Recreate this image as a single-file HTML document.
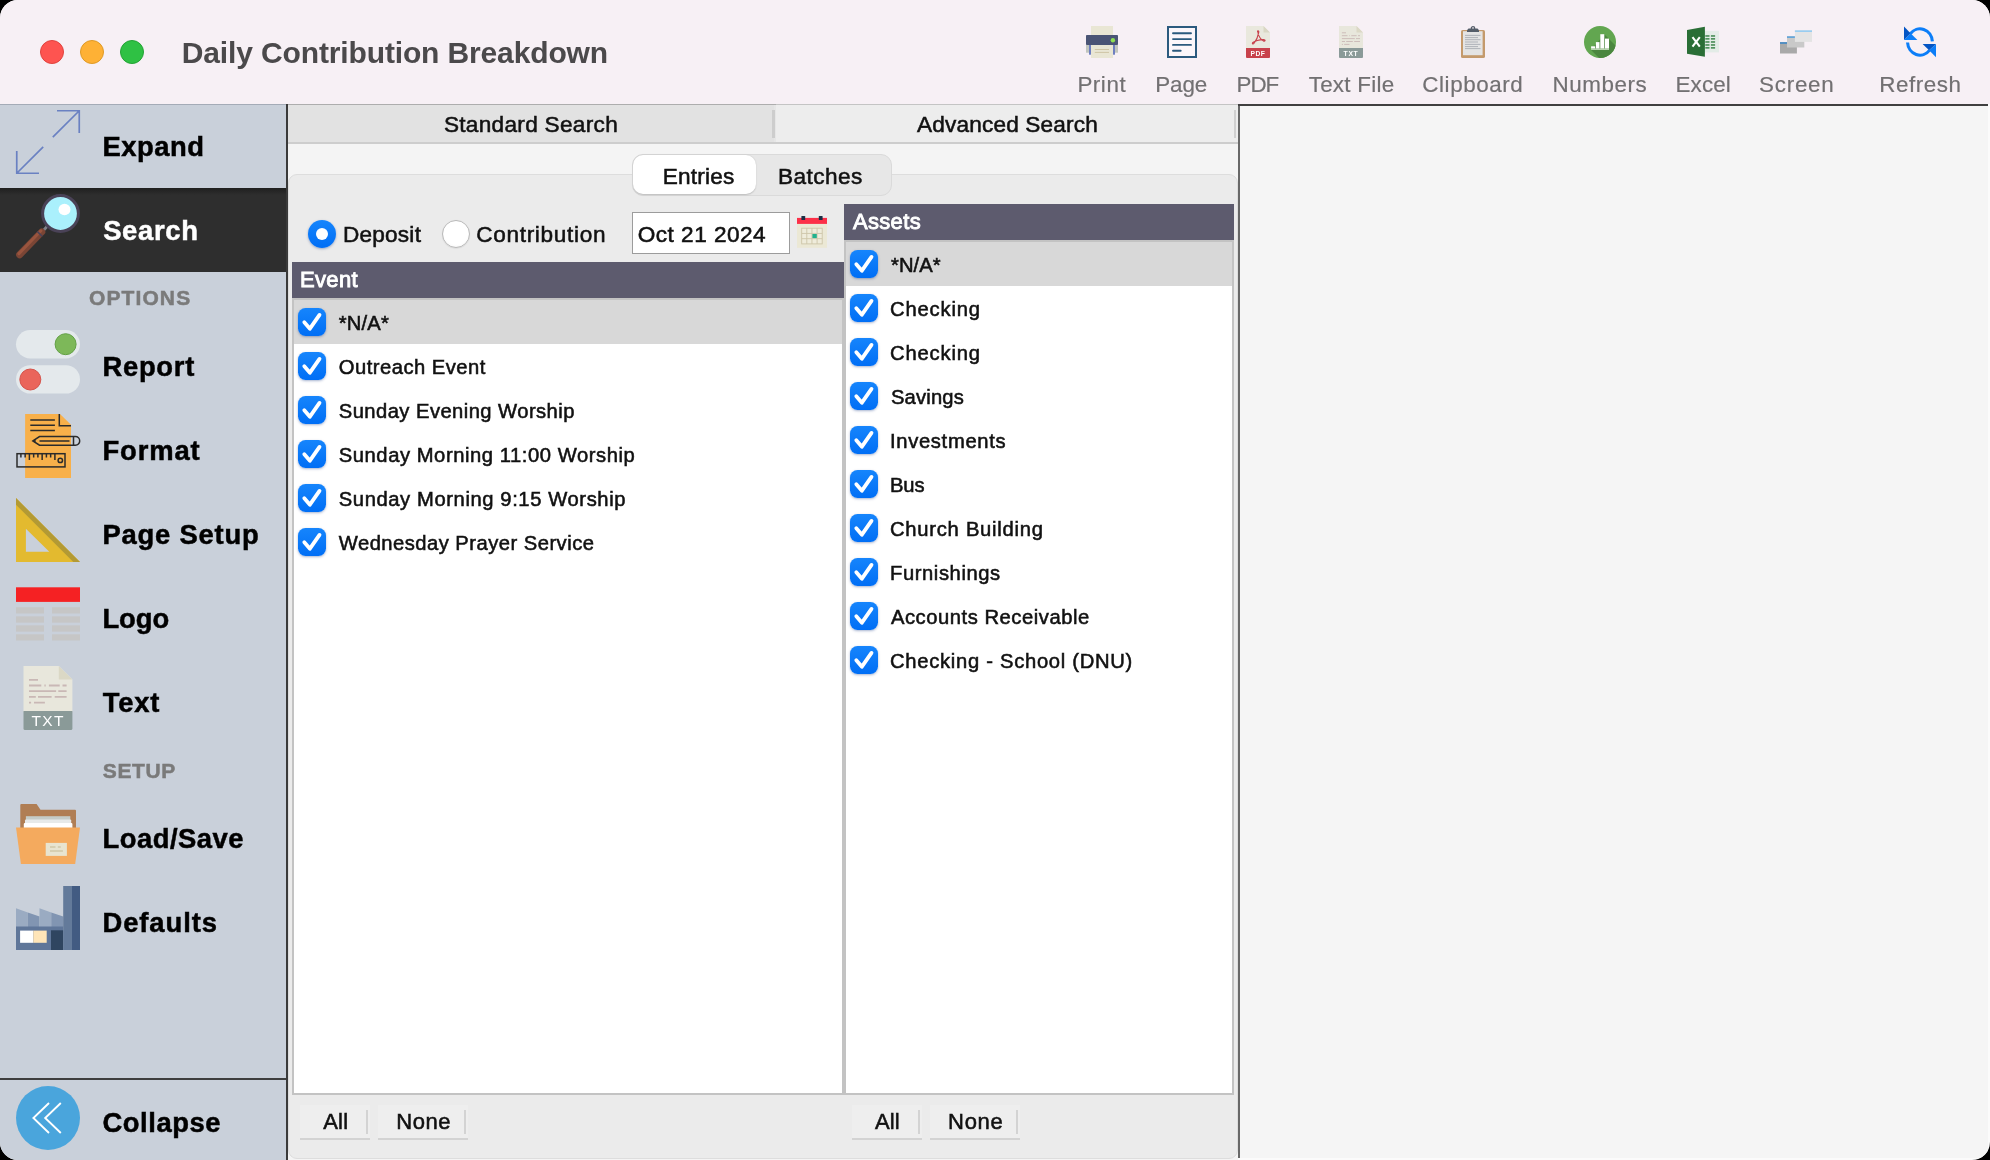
<!DOCTYPE html>
<html>
<head>
<meta charset="utf-8">
<title>Daily Contribution Breakdown</title>
<style>
*{box-sizing:border-box;margin:0;padding:0}
html,body{width:1990px;height:1160px;overflow:hidden;background:#000;font-family:"Liberation Sans",sans-serif;}
#win{position:absolute;left:0;top:0;width:1990px;height:1160px;border-radius:18px;overflow:hidden;background:#fbfbfb;}
.a{position:absolute}
.tx{position:absolute;white-space:nowrap;}
.tl{position:absolute;top:40px;width:24px;height:24px;border-radius:50%;}
.ic{position:absolute;overflow:visible}
.cb{position:absolute;width:28px;height:28px;border-radius:7.5px;background:linear-gradient(#1685fc,#006ef5);box-shadow:0 1px 2.5px rgba(0,40,120,.35);}
.cb svg{position:absolute;left:0;top:0;width:28px;height:28px;}
.btn{position:absolute;top:1105px;height:35px;background:#eeeeee;border-bottom:2px solid #d3d3d3;}
.btn i{position:absolute;right:2px;top:5px;width:2px;height:24px;background:#d3d3d3;}
</style>
</head>
<body>
<div id="win">
<!-- title bar -->
<div class="a" style="left:0;top:0;width:1990px;height:104px;background:#f7f0f5"></div>
<div class="tl" style="left:40px;background:#fe5450;border:1px solid #e0433e"></div>
<div class="tl" style="left:80px;background:#feb135;border:1px solid #df9a26"></div>
<div class="tl" style="left:120px;background:#2fc144;border:1px solid #24a335"></div>

<!-- center panel -->
<div class="a" style="left:288px;top:104px;width:950px;height:1056px;background:#f4f4f4"></div>
<div class="a" style="left:288px;top:105px;width:486px;height:38px;background:#e2e2e2"></div>
<div class="a" style="left:776px;top:105px;width:462px;height:38px;background:#ededed"></div>
<div class="a" style="left:288px;top:104px;width:488px;height:1px;background:#adadad"></div>
<div class="a" style="left:776px;top:104px;width:462px;height:1px;background:#c4c4c4"></div>
<div class="a" style="left:288px;top:142px;width:950px;height:2px;background:#cdcdcd"></div>
<div class="a" style="left:774px;top:105px;width:2px;height:37px;background:#e6e6e6"></div>
<div class="a" style="left:772px;top:110px;width:2.5px;height:28px;background:#cdcdcd"></div>
<div class="a" style="left:1234px;top:110px;width:2px;height:28px;background:#d0d0d0"></div>
<!-- group box -->
<div class="a" style="left:288px;top:174px;width:950px;height:985px;background:#ebebeb;border:1px solid #dddddd;border-radius:9px"></div>
<!-- segmented -->
<div class="a" style="left:632px;top:154px;width:260px;height:42px;background:#e7e7e7;border:1px solid #dadada;border-radius:11px"></div>
<div class="a" style="left:633px;top:155px;width:123px;height:39px;background:#fff;border-radius:10px;box-shadow:0 0.5px 1.5px rgba(0,0,0,.18)"></div>
<!-- radios -->
<div class="a" style="left:307.5px;top:220px;width:28px;height:28px;border-radius:50%;background:linear-gradient(#1685fc,#006ef5);box-shadow:0 1px 2.5px rgba(0,40,120,.35)"></div>
<div class="a" style="left:315.5px;top:228px;width:12px;height:12px;border-radius:50%;background:#fff"></div>
<div class="a" style="left:442px;top:220px;width:28px;height:28px;border-radius:50%;background:radial-gradient(circle at 50% 45%,#fff 60%,#f0f0f0);border:1px solid #b9b9b9;box-shadow:0 0.5px 1px rgba(0,0,0,.10)"></div>
<!-- date input -->
<div class="a" style="left:632px;top:212px;width:158px;height:42px;background:#fff;border:1px solid #9c9c9c"></div>
<!-- Event list -->
<div class="a" style="left:292px;top:298px;width:552px;height:797px;background:#fff;border:2px solid #c3c3c3"></div>
<div class="a" style="left:294px;top:300px;width:548px;height:44px;background:#d8d8d8"></div>
<div class="a" style="left:292px;top:262px;width:552px;height:36px;background:#5d5b6e"></div>
<!-- Assets list -->
<div class="a" style="left:844px;top:240px;width:390px;height:855px;background:#fff;border:2px solid #c3c3c3"></div>
<div class="a" style="left:846px;top:242px;width:386px;height:44px;background:#d8d8d8"></div>
<div class="a" style="left:844px;top:204px;width:390px;height:36px;background:#5d5b6e"></div>
<div class="cb" style="left:298px;top:308px"><svg viewBox="0 0 28 28"><path d="M6.3 14.3 L11.9 20.7 L21.5 6.9" fill="none" stroke="#fff" stroke-width="3.8" stroke-linecap="round" stroke-linejoin="round"/></svg></div>
<div class="cb" style="left:298px;top:352px"><svg viewBox="0 0 28 28"><path d="M6.3 14.3 L11.9 20.7 L21.5 6.9" fill="none" stroke="#fff" stroke-width="3.8" stroke-linecap="round" stroke-linejoin="round"/></svg></div>
<div class="cb" style="left:298px;top:396px"><svg viewBox="0 0 28 28"><path d="M6.3 14.3 L11.9 20.7 L21.5 6.9" fill="none" stroke="#fff" stroke-width="3.8" stroke-linecap="round" stroke-linejoin="round"/></svg></div>
<div class="cb" style="left:298px;top:440px"><svg viewBox="0 0 28 28"><path d="M6.3 14.3 L11.9 20.7 L21.5 6.9" fill="none" stroke="#fff" stroke-width="3.8" stroke-linecap="round" stroke-linejoin="round"/></svg></div>
<div class="cb" style="left:298px;top:484px"><svg viewBox="0 0 28 28"><path d="M6.3 14.3 L11.9 20.7 L21.5 6.9" fill="none" stroke="#fff" stroke-width="3.8" stroke-linecap="round" stroke-linejoin="round"/></svg></div>
<div class="cb" style="left:298px;top:528px"><svg viewBox="0 0 28 28"><path d="M6.3 14.3 L11.9 20.7 L21.5 6.9" fill="none" stroke="#fff" stroke-width="3.8" stroke-linecap="round" stroke-linejoin="round"/></svg></div>
<div class="cb" style="left:850px;top:250px"><svg viewBox="0 0 28 28"><path d="M6.3 14.3 L11.9 20.7 L21.5 6.9" fill="none" stroke="#fff" stroke-width="3.8" stroke-linecap="round" stroke-linejoin="round"/></svg></div>
<div class="cb" style="left:850px;top:294px"><svg viewBox="0 0 28 28"><path d="M6.3 14.3 L11.9 20.7 L21.5 6.9" fill="none" stroke="#fff" stroke-width="3.8" stroke-linecap="round" stroke-linejoin="round"/></svg></div>
<div class="cb" style="left:850px;top:338px"><svg viewBox="0 0 28 28"><path d="M6.3 14.3 L11.9 20.7 L21.5 6.9" fill="none" stroke="#fff" stroke-width="3.8" stroke-linecap="round" stroke-linejoin="round"/></svg></div>
<div class="cb" style="left:850px;top:382px"><svg viewBox="0 0 28 28"><path d="M6.3 14.3 L11.9 20.7 L21.5 6.9" fill="none" stroke="#fff" stroke-width="3.8" stroke-linecap="round" stroke-linejoin="round"/></svg></div>
<div class="cb" style="left:850px;top:426px"><svg viewBox="0 0 28 28"><path d="M6.3 14.3 L11.9 20.7 L21.5 6.9" fill="none" stroke="#fff" stroke-width="3.8" stroke-linecap="round" stroke-linejoin="round"/></svg></div>
<div class="cb" style="left:850px;top:470px"><svg viewBox="0 0 28 28"><path d="M6.3 14.3 L11.9 20.7 L21.5 6.9" fill="none" stroke="#fff" stroke-width="3.8" stroke-linecap="round" stroke-linejoin="round"/></svg></div>
<div class="cb" style="left:850px;top:514px"><svg viewBox="0 0 28 28"><path d="M6.3 14.3 L11.9 20.7 L21.5 6.9" fill="none" stroke="#fff" stroke-width="3.8" stroke-linecap="round" stroke-linejoin="round"/></svg></div>
<div class="cb" style="left:850px;top:558px"><svg viewBox="0 0 28 28"><path d="M6.3 14.3 L11.9 20.7 L21.5 6.9" fill="none" stroke="#fff" stroke-width="3.8" stroke-linecap="round" stroke-linejoin="round"/></svg></div>
<div class="cb" style="left:850px;top:602px"><svg viewBox="0 0 28 28"><path d="M6.3 14.3 L11.9 20.7 L21.5 6.9" fill="none" stroke="#fff" stroke-width="3.8" stroke-linecap="round" stroke-linejoin="round"/></svg></div>
<div class="cb" style="left:850px;top:646px"><svg viewBox="0 0 28 28"><path d="M6.3 14.3 L11.9 20.7 L21.5 6.9" fill="none" stroke="#fff" stroke-width="3.8" stroke-linecap="round" stroke-linejoin="round"/></svg></div>

<!-- buttons -->
<div class="btn" style="left:300px;width:70px"><i></i></div>
<div class="btn" style="left:378px;width:90px"><i></i></div>
<div class="btn" style="left:852px;width:70px"><i></i></div>
<div class="btn" style="left:930px;width:90px"><i></i></div>

<!-- right panel -->
<div class="a" style="left:1240px;top:106px;width:748px;height:1052px;background:#f5f5f5"></div>
<div class="a" style="left:1238px;top:104px;width:2px;height:1054px;background:#686868"></div>
<div class="a" style="left:1238px;top:104px;width:750px;height:2px;background:#404040"></div>

<!-- sidebar -->
<div class="a" style="left:0;top:104px;width:286px;height:1056px;background:#c9d0da"></div>
<div class="a" style="left:0;top:104px;width:286px;height:1px;background:#a4abb7"></div>
<div class="a" style="left:0;top:188px;width:286px;height:84px;background:linear-gradient(#1f1f1f,#2e2e2e 7px)"></div>
<div class="a" style="left:0;top:1078px;width:286px;height:2px;background:#3e3e3e"></div>
<div class="a" style="left:286px;top:104px;width:2px;height:1056px;background:#3a3a3a"></div>

<div style="position:absolute;left:0;top:0;width:1990px;height:1160px;will-change:transform">
<!-- ===== toolbar icons ===== -->
<svg class="ic" style="left:1086px;top:26px" width="32" height="32" viewBox="0 0 32 32">
 <rect x="5" y="0" width="22" height="10" fill="#e9e6d4"/>
 <rect x="0" y="19" width="5" height="7.7" fill="#c1c5be"/><rect x="27" y="19" width="5" height="7.7" fill="#c1c5be"/>
 <rect x="3" y="19" width="2" height="9.7" fill="#6e7fc1"/><rect x="27" y="19" width="2" height="9.7" fill="#6e7fc1"/>
 <rect x="5" y="18" width="22" height="14" fill="#e9e6d4"/>
 <rect x="0" y="9" width="32" height="10" rx="0.8" fill="#4a5475"/>
 <circle cx="26.9" cy="14.2" r="2.2" fill="#8ee053"/>
 <rect x="8.8" y="23" width="14.2" height="1" fill="#cfc5a6"/><rect x="8.8" y="25.9" width="14.2" height="1" fill="#cfc5a6"/>
</svg>
<svg class="ic" style="left:1167px;top:26px" width="30" height="32" viewBox="0 0 30 32">
 <rect x="1" y="1" width="28" height="30" fill="#fbf6fa" stroke="#2b5a7e" stroke-width="2"/>
 <g stroke="#2b5a7e" stroke-width="1.9" stroke-linecap="round"><path d="M6 7.3H24M6 13.1H24M6 18.9H24M6 24.7H13.7"/></g>
</svg>
<svg class="ic" style="left:1246px;top:26px" width="24" height="32" viewBox="0 0 24 32">
 <path d="M0 0H17.5L24 6.5V23H0Z" fill="#e9e8dd"/><path d="M17.5 0L24 6.5H17.5Z" fill="#d9d7c4"/>
 <path d="M0 22H24V31a1 1 0 0 1-1 1H1a1 1 0 0 1-1-1Z" fill="#c8414b"/>
 <g fill="none" stroke="#c8414b" stroke-width="1.1" stroke-linecap="round" stroke-linejoin="round" transform="translate(0.2 0.8)">
  <path d="M11.6 5.2c-1.2-1.6 1.6-2 .9.6c-.5 2.6-1.7 7-4.600 10.600c-1.300 1.700-2.400.4-1.200-.7c1.600-1.300 6.600-3.100 10.700-2.900c2.100.2 1.900 1.900.2 1.500c-2.600-.8-5.600-5.100-6-9.100z"/>
 </g>
 <text x="12" y="30.1" font-family="Liberation Sans" font-weight="bold" font-size="6.7" fill="#fff" text-anchor="middle" letter-spacing="0.5">PDF</text>
</svg>
<svg class="ic" style="left:1339px;top:26px" width="24" height="32" viewBox="0 0 24 32">
 <path d="M0 0H17.5L24 6.5V23H0Z" fill="#e8e7dc"/><path d="M17.5 0L24 6.5H17.5Z" fill="#dbd8c5"/>
 <path d="M0 22H24V31a1 1 0 0 1-1 1H1a1 1 0 0 1-1-1Z" fill="#8a9a98"/>
 <g stroke="#c9b8b5" stroke-width="0.9"><path d="M2.900 6.800H7M2.900 9.700H8.500M10.200 9.700H10.800M12.300 9.700H17.600M19 9.700H21M2.900 12.600H15.800M17 12.600H21M2.900 15.500H6M7.200 15.500H13.800M15.200 15.500H21M2.900 18.400H3.900M5.200 18.400H10.500"/></g>
 <text x="12" y="30" font-family="Liberation Sans" font-weight="bold" font-size="6.800" fill="#fff" text-anchor="middle" letter-spacing="0.7">TXT</text>
</svg>
<svg class="ic" style="left:1461px;top:26px" width="24" height="32" viewBox="0 0 24 32">
 <rect x="0" y="4" width="24" height="28" rx="1.6" fill="#c49a6c"/>
 <rect x="2" y="5.2" width="19.600" height="24" fill="#e4e4e4"/>
 <circle cx="12" cy="2.300" r="1.700" fill="none" stroke="#545d69" stroke-width="1.300"/>
 <path d="M7.500 2.600H16.500L18 4.200V6H6V4.200Z" fill="#545d69"/>
 <g stroke="#a9adb3" stroke-width="0.9"><path d="M4 9.400H19.500M4 11.600H17M4 13.700H19.500M4 16H17M4 18.400H19.500M4 20.600H17M4 22.600H19.500"/></g>
</svg>
<svg class="ic" style="left:1584px;top:26px" width="32" height="32" viewBox="0 0 32 32">
 <defs><clipPath id="nc"><circle cx="16" cy="16" r="16"/></clipPath></defs>
 <circle cx="16" cy="16" r="16" fill="#62a650"/>
 <path clip-path="url(#nc)" d="M7.100 24L20.300 8.200L40 28V40H23Z" fill="#4b873f"/>
 <rect x="7.100" y="22.500" width="17.900" height="1.500" fill="#b7d4ad"/>
 <g fill="#fff"><rect x="7.100" y="20.300" width="4.100" height="2.200"/><rect x="11.900" y="16.100" width="3.600" height="6.400"/><rect x="16.300" y="8.200" width="4" height="14.300"/><rect x="21" y="12.600" width="4" height="9.900"/></g>
</svg>
<svg class="ic" style="left:1687px;top:26px" width="32" height="32" viewBox="0 0 32 32">
 <rect x="17" y="4.900" width="15" height="21.500" fill="#e3ece7"/>
 <g fill="#2b7a3b"><rect x="18.300" y="9.300" width="4.200" height="1.35"/><rect x="23.900" y="9.300" width="4.200" height="1.35"/><rect x="18.300" y="12.200" width="4.200" height="1.35"/><rect x="23.900" y="12.200" width="4.200" height="1.35"/><rect x="18.300" y="15.300" width="4.200" height="1.35"/><rect x="23.900" y="15.300" width="4.200" height="1.35"/><rect x="18.300" y="18.300" width="4.200" height="1.35"/><rect x="23.900" y="18.300" width="4.200" height="1.35"/><rect x="18.300" y="21.200" width="4.200" height="1.35"/><rect x="23.900" y="21.200" width="4.200" height="1.35"/></g>
 <path d="M0 3.900L17.900.7V30.700L0 27.700Z" fill="#2a6e36"/>
 <path d="M5.500 11.200L12.800 20.600M12.800 11.200L5.500 20.600" stroke="#fff" stroke-width="2.100" fill="none"/>
</svg>
<svg class="ic" style="left:1780px;top:26px" width="32" height="32" viewBox="0 0 32 32">
 <rect x="0" y="16.200" width="16.900" height="11.300" fill="#a9a9a9"/><rect x="0" y="16.200" width="16.900" height="1.600" fill="#4088c6"/>
 <rect x="7" y="10.300" width="17.300" height="11.200" fill="#c9c9c9"/><rect x="7" y="10.300" width="17.300" height="1.600" fill="#5ba2da"/>
 <rect x="14.900" y="4.400" width="17.100" height="11.500" fill="#e4e4e4"/><rect x="14.900" y="4.400" width="17.100" height="1.500" fill="#8fcaf2"/>
</svg>
<svg class="ic" style="left:1904px;top:26px" width="32" height="32" viewBox="0 0 32 32">
 <g fill="none" stroke="#0c7ef8" stroke-width="3.100">
  <path d="M6.300 7.800A12.400 13.350 0 0 1 28.350 15.400"/>
  <path d="M3.550 16.500A12.400 13.350 0 0 0 25.600 24.100"/>
 </g>
 <path d="M0 13.900L6.500 7.200L13.400 13.900Z" fill="#0c7ef8"/><path d="M0 .5L6.500 7.200L0 13.900Z" fill="#0455c4"/>
 <path d="M32 18.100V31.200L25.100 24.300Z" fill="#0c7ef8"/><path d="M18.600 18.100H32L25.100 24.300Z" fill="#0455c4"/>
</svg>
<!-- calendar -->
<svg class="ic" style="left:797px;top:216px" width="30" height="32" viewBox="0 0 30 32">
 <rect x="0" y="7.500" width="30" height="24.300" fill="#ebe8d5"/>
 <rect x="0" y="1.900" width="30" height="6" fill="#fc3048"/>
 <rect x="4.400" y="0" width="3.800" height="4" rx="0.6" fill="#1c2e45"/><rect x="21.800" y="0" width="3.800" height="4" rx="0.6" fill="#1c2e45"/>
 <rect x="4.700" y="12.200" width="20.500" height="15.700" fill="#efecdb" stroke="#cdc5a8" stroke-width="0.9"/>
 <g stroke="#cdc5a8" stroke-width="0.9"><path d="M9.800 12.200V27.900M14.950 12.200V27.900M20.100 12.200V27.900M4.700 17.450H25.200M4.700 22.650H25.200"/></g>
 <rect x="15.400" y="18" width="4.400" height="4.100" fill="#22b18c"/>
</svg>
<!-- ===== sidebar icons ===== -->
<svg class="ic" style="left:16px;top:110px" width="64" height="64" viewBox="0 0 64 64">
 <g fill="none" stroke="#6a81c2" stroke-width="1.7"><path d="M41 .75H63.250V23M63.250 .75L36.800 27.200"/><path d="M.75 41V63.250H23M.75 63.250L27.200 36.800"/></g>
</svg>
<svg class="ic" style="left:16px;top:194px" width="64" height="64" viewBox="0 0 64 64">
 <path d="M31 32.500L26.500 37.500" stroke="#808289" stroke-width="2.800"/>
 <path d="M25.800 37.900L3.600 60.800" stroke="#7a4535" stroke-width="7" stroke-linecap="round"/>
 <path d="M23.600 35.600L1.600 58.400" stroke="#9d563f" stroke-width="3" stroke-linecap="round" transform="translate(1.300 1.200)" opacity="0.9"/>
 <path d="M21.300 37.500L26.300 42.400" stroke="#4a4257" stroke-width="1.600"/>
 <circle cx="44.500" cy="19.500" r="17.900" fill="#aaf0fc" stroke="#4a4257" stroke-width="3"/>
 <ellipse cx="48.500" cy="15.500" rx="6" ry="5.800" fill="#fff"/>
</svg>
<svg class="ic" style="left:16px;top:330px" width="64" height="64" viewBox="0 0 64 64">
 <rect x="0" y="0" width="64" height="28.400" rx="14.200" fill="#e4e9ec"/>
 <circle cx="49.600" cy="14.200" r="10.500" fill="#7db859" stroke="#62a044" stroke-width="1"/>
 <rect x="0" y="35.200" width="64" height="28.400" rx="14.200" fill="#e4e9ec"/>
 <circle cx="14.300" cy="49.500" r="10.500" fill="#ea655b" stroke="#d5534b" stroke-width="1"/>
</svg>
<svg class="ic" style="left:16px;top:414px" width="64" height="64" viewBox="0 0 64 64">
 <path d="M9.100 0H44L55 10.800V64H9.100Z" fill="#f8b04a"/>
 <g fill="none" stroke="#2b2b2b" stroke-width="1.500">
  <path d="M43.300 0V11.800H55"/>
  <path d="M14.300 6.100H38.900M14.300 11.200H38.900M14.300 16.500H38.900"/>
  <path d="M16.900 26.900L23.500 22.600H59.400a4.300 4.300 0 0 1 0 8.600H23.500Z"/>
  <path d="M57.500 22.600V31.200M23.500 26.900H53.500"/>
  <rect x="1" y="39.700" width="48" height="13.200"/>
  <path d="M4.900 39.700V43.600M9.150 39.700V43.600M13.400 39.700V45.900M17.650 39.700V43.600M21.900 39.700V43.600M26.150 39.700V45.900M30.400 39.700V43.600M34.650 39.700V43.600M38.900 39.700V45.900"/>
  <circle cx="44.300" cy="46.400" r="2.200"/>
 </g>
 <path d="M16.900 26.900L19.600 25.100V28.700Z" fill="#2b2b2b"/>
</svg>
<svg class="ic" style="left:16px;top:498px" width="64" height="64" viewBox="0 0 64 64">
 <path fill-rule="evenodd" d="M0 0L64 64H0ZM9.900 30.800V53.800H33.300Z" fill="#e3ba2f"/>
 <path d="M0 0L64 64H57.300L0 6.700Z" fill="#b39a34"/>
</svg>
<svg class="ic" style="left:16px;top:582px" width="64" height="64" viewBox="0 0 64 64">
 <rect x="0" y="5.300" width="64" height="14.600" fill="#f52123"/>
 <g fill="#c6c6c6"><rect x="0" y="25.200" width="28" height="6.300"/><rect x="36" y="25.200" width="28" height="6.300"/><rect x="0" y="34.400" width="28" height="6.200"/><rect x="36" y="34.400" width="28" height="6.200"/><rect x="0" y="43.400" width="28" height="6.200"/><rect x="36" y="43.400" width="28" height="6.200"/><rect x="0" y="52.300" width="28" height="6.200"/><rect x="36" y="52.300" width="28" height="6.200"/></g>
</svg>
<svg class="ic" style="left:16px;top:666px" width="64" height="64" viewBox="0 0 64 64">
 <path d="M7.500 0H42.800L56.400 13.600V46H7.500Z" fill="#e8e7dc"/><path d="M42.800 0L56.400 13.600H42.800Z" fill="#dbd8c5"/>
 <path d="M7.500 44.900H56.400V62.500a1.500 1.500 0 0 1-1.500 1.500H9a1.500 1.500 0 0 1-1.500-1.500Z" fill="#8a9a98"/>
 <g stroke="#c9b8b5" stroke-width="1.800"><path d="M13 13.800H22M13 19.500H25.300M28.400 19.500H29.700M32.900 19.500H43.700M46.500 19.500H50.600M13 25.200H40.100M42.300 25.200H50.600M13 30.900H19.800M22 30.900H35.600M38.700 30.900H50.600M13 36.600H15.100M18 36.600H28.900"/></g>
 <text x="32.200" y="60.200" font-family="Liberation Sans" font-size="15.500" fill="#fff" text-anchor="middle" letter-spacing="1.300">TXT</text>
</svg>
<svg class="ic" style="left:16px;top:802px" width="64" height="64" viewBox="0 0 64 64">
 <path d="M4.300 3.100a1 1 0 0 1 1-1H20.600L24.500 7.700H59a1 1 0 0 1 1 1V27H4.300Z" fill="#b07e54"/>
 <rect x="9.900" y="14.200" width="44.400" height="6" fill="#c5ccc8"/>
 <rect x="9" y="17.400" width="46.200" height="6" rx="1" fill="#e7eaea"/>
 <rect x="7.800" y="21.100" width="48.600" height="6" rx="1" fill="#fff"/>
 <path d="M0 25.400H64L59.200 62H4.900Z" fill="#f4aa5e"/>
 <rect x="29.700" y="40.900" width="21.200" height="13" fill="#e8e4d0"/>
 <g stroke="#cfc8a8" stroke-width="1.500"><path d="M34 44.900H39.500M41.800 44.900H44.700M34 49H46.900"/></g>
</svg>
<svg class="ic" style="left:16px;top:886px" width="64" height="64" viewBox="0 0 64 64">
 <path d="M0 22.200L11.750 26.400V41H0Z" fill="#9aabc2"/><path d="M11.750 26.400L23.500 30.600V41H11.750Z" fill="#8195b2"/>
 <path d="M23.500 22.200L35.250 26.400V41H23.500Z" fill="#9aabc2"/><path d="M35.250 26.400L47.200 30.600V41H35.250Z" fill="#8195b2"/>
 <rect x="0" y="40.500" width="47.300" height="23.500" fill="#5f7699"/>
 <rect x="4.100" y="44.600" width="13.200" height="12.200" fill="#fff"/><rect x="17.300" y="44.600" width="13.400" height="12.200" fill="#ffe5b8"/>
 <rect x="35" y="44.300" width="12.300" height="19.700" fill="#2f4560"/>
 <rect x="47.200" y="0" width="8.800" height="64" fill="#637a9a"/><rect x="56" y="0" width="8" height="64" fill="#425b82"/>
</svg>
<svg class="ic" style="left:16px;top:1086px" width="64" height="64" viewBox="0 0 64 64">
 <circle cx="32" cy="32" r="32" fill="#4aa5dc"/>
 <g fill="none" stroke="#fff" stroke-width="1.900"><path d="M33 17L17.400 32L33 47"/><path d="M44.800 17L29.200 32L44.800 47"/></g>
</svg>

</div>
<div id="txl" style="position:absolute;left:0;top:0;width:1990px;height:1160px;will-change:transform">
<div class="tx" style="left:181.81px;top:32.99px;font-size:30px;line-height:39px;letter-spacing:-0.137px;color:#4b494b;-webkit-text-stroke:0.01px #4b494b;font-weight:bold;">Daily Contribution Breakdown</div>
<div class="tx" style="left:1077.40px;top:70.40px;font-size:22.4px;line-height:29px;letter-spacing:0.546px;color:#727072;-webkit-text-stroke:0.2px #727072;">Print</div>
<div class="tx" style="left:1155.30px;top:70.40px;font-size:22.4px;line-height:29px;letter-spacing:-0.147px;color:#727072;-webkit-text-stroke:0.2px #727072;">Page</div>
<div class="tx" style="left:1236.50px;top:70.40px;font-size:22.4px;line-height:29px;letter-spacing:-1.002px;color:#727072;-webkit-text-stroke:0.2px #727072;">PDF</div>
<div class="tx" style="left:1308.70px;top:70.40px;font-size:22.4px;line-height:29px;letter-spacing:0.261px;color:#727072;-webkit-text-stroke:0.2px #727072;">Text File</div>
<div class="tx" style="left:1422.30px;top:70.40px;font-size:22.4px;line-height:29px;letter-spacing:0.577px;color:#727072;-webkit-text-stroke:0.2px #727072;">Clipboard</div>
<div class="tx" style="left:1552.40px;top:70.40px;font-size:22.4px;line-height:29px;letter-spacing:0.594px;color:#727072;-webkit-text-stroke:0.2px #727072;">Numbers</div>
<div class="tx" style="left:1675.50px;top:70.40px;font-size:22.4px;line-height:29px;letter-spacing:0.131px;color:#727072;-webkit-text-stroke:0.2px #727072;">Excel</div>
<div class="tx" style="left:1759.10px;top:70.40px;font-size:22.4px;line-height:29px;letter-spacing:0.742px;color:#727072;-webkit-text-stroke:0.2px #727072;">Screen</div>
<div class="tx" style="left:1879.30px;top:70.40px;font-size:22.4px;line-height:29px;letter-spacing:0.525px;color:#727072;-webkit-text-stroke:0.2px #727072;">Refresh</div>
<div class="tx" style="left:102.45px;top:128.65px;font-size:27.4px;line-height:36px;letter-spacing:0.520px;color:#000;-webkit-text-stroke:0.5px #000;font-weight:bold;">Expand</div>
<div class="tx" style="left:103.15px;top:212.65px;font-size:27.4px;line-height:36px;letter-spacing:0.674px;color:#fff;-webkit-text-stroke:0.5px #fff;font-weight:bold;">Search</div>
<div class="tx" style="left:102.45px;top:348.65px;font-size:27.4px;line-height:36px;letter-spacing:0.713px;color:#000;-webkit-text-stroke:0.5px #000;font-weight:bold;">Report</div>
<div class="tx" style="left:102.45px;top:432.65px;font-size:27.4px;line-height:36px;letter-spacing:0.878px;color:#000;-webkit-text-stroke:0.5px #000;font-weight:bold;">Format</div>
<div class="tx" style="left:102.45px;top:516.65px;font-size:27.4px;line-height:36px;letter-spacing:0.796px;color:#000;-webkit-text-stroke:0.5px #000;font-weight:bold;">Page Setup</div>
<div class="tx" style="left:102.45px;top:600.65px;font-size:27.4px;line-height:36px;letter-spacing:-0.065px;color:#000;-webkit-text-stroke:0.5px #000;font-weight:bold;">Logo</div>
<div class="tx" style="left:102.85px;top:684.65px;font-size:27.4px;line-height:36px;letter-spacing:0.779px;color:#000;-webkit-text-stroke:0.5px #000;font-weight:bold;">Text</div>
<div class="tx" style="left:102.45px;top:820.65px;font-size:27.4px;line-height:36px;letter-spacing:0.503px;color:#000;-webkit-text-stroke:0.5px #000;font-weight:bold;">Load/Save</div>
<div class="tx" style="left:102.45px;top:904.65px;font-size:27.4px;line-height:36px;letter-spacing:0.924px;color:#000;-webkit-text-stroke:0.5px #000;font-weight:bold;">Defaults</div>
<div class="tx" style="left:102.45px;top:1104.65px;font-size:27.4px;line-height:36px;letter-spacing:0.553px;color:#000;-webkit-text-stroke:0.5px #000;font-weight:bold;">Collapse</div>
<div class="tx" style="left:88.95px;top:284.45px;font-size:21px;line-height:27px;letter-spacing:1.116px;color:#7a7a7a;-webkit-text-stroke:0.5px #7a7a7a;font-weight:bold;">OPTIONS</div>
<div class="tx" style="left:102.85px;top:756.55px;font-size:21px;line-height:27px;letter-spacing:0.623px;color:#7a7a7a;-webkit-text-stroke:0.5px #7a7a7a;font-weight:bold;">SETUP</div>
<div class="tx" style="left:443.88px;top:109.92px;font-size:22.6px;line-height:29px;letter-spacing:0.304px;color:#111;-webkit-text-stroke:0.55px #111;">Standard Search</div>
<div class="tx" style="left:917.07px;top:109.92px;font-size:22.6px;line-height:29px;letter-spacing:0.169px;color:#111;-webkit-text-stroke:0.55px #111;">Advanced Search</div>
<div class="tx" style="left:662.67px;top:161.62px;font-size:22.6px;line-height:29px;letter-spacing:0.221px;color:#111;-webkit-text-stroke:0.55px #111;">Entries</div>
<div class="tx" style="left:777.98px;top:161.62px;font-size:22.6px;line-height:29px;letter-spacing:0.452px;color:#111;-webkit-text-stroke:0.55px #111;">Batches</div>
<div class="tx" style="left:342.88px;top:220.12px;font-size:22.6px;line-height:29px;letter-spacing:0.237px;color:#111;-webkit-text-stroke:0.55px #111;">Deposit</div>
<div class="tx" style="left:476.27px;top:220.12px;font-size:22.6px;line-height:29px;letter-spacing:0.672px;color:#111;-webkit-text-stroke:0.55px #111;">Contribution</div>
<div class="tx" style="left:637.77px;top:220.12px;font-size:22.6px;line-height:29px;letter-spacing:0.482px;color:#111;-webkit-text-stroke:0.55px #111;">Oct 21 2024</div>
<div class="tx" style="left:300.05px;top:265.25px;font-size:22px;line-height:29px;letter-spacing:0.314px;color:#fff;-webkit-text-stroke:0.9px #fff;">Event</div>
<div class="tx" style="left:852.95px;top:207.25px;font-size:22px;line-height:29px;letter-spacing:0.336px;color:#fff;-webkit-text-stroke:0.9px #fff;">Assets</div>
<div class="tx" style="left:338.77px;top:310.23px;font-size:20.2px;line-height:26px;letter-spacing:0.185px;color:#111;-webkit-text-stroke:0.55px #111;">*N/A*</div>
<div class="tx" style="left:338.77px;top:354.23px;font-size:20.2px;line-height:26px;letter-spacing:0.484px;color:#111;-webkit-text-stroke:0.55px #111;">Outreach Event</div>
<div class="tx" style="left:338.77px;top:398.23px;font-size:20.2px;line-height:26px;letter-spacing:0.446px;color:#111;-webkit-text-stroke:0.55px #111;">Sunday Evening Worship</div>
<div class="tx" style="left:338.77px;top:442.23px;font-size:20.2px;line-height:26px;letter-spacing:0.558px;color:#111;-webkit-text-stroke:0.55px #111;">Sunday Morning 11:00 Worship</div>
<div class="tx" style="left:338.77px;top:486.23px;font-size:20.2px;line-height:26px;letter-spacing:0.596px;color:#111;-webkit-text-stroke:0.55px #111;">Sunday Morning 9:15 Worship</div>
<div class="tx" style="left:338.77px;top:530.23px;font-size:20.2px;line-height:26px;letter-spacing:0.476px;color:#111;-webkit-text-stroke:0.55px #111;">Wednesday Prayer Service</div>
<div class="tx" style="left:890.98px;top:252.23px;font-size:20.2px;line-height:26px;letter-spacing:0.085px;color:#111;-webkit-text-stroke:0.55px #111;">*N/A*</div>
<div class="tx" style="left:889.98px;top:296.23px;font-size:20.2px;line-height:26px;letter-spacing:0.845px;color:#111;-webkit-text-stroke:0.55px #111;">Checking</div>
<div class="tx" style="left:889.98px;top:340.23px;font-size:20.2px;line-height:26px;letter-spacing:0.845px;color:#111;-webkit-text-stroke:0.55px #111;">Checking</div>
<div class="tx" style="left:890.98px;top:384.23px;font-size:20.2px;line-height:26px;letter-spacing:0.171px;color:#111;-webkit-text-stroke:0.55px #111;">Savings</div>
<div class="tx" style="left:889.98px;top:428.23px;font-size:20.2px;line-height:26px;letter-spacing:0.681px;color:#111;-webkit-text-stroke:0.55px #111;">Investments</div>
<div class="tx" style="left:889.98px;top:472.23px;font-size:20.2px;line-height:26px;letter-spacing:-0.071px;color:#111;-webkit-text-stroke:0.55px #111;">Bus</div>
<div class="tx" style="left:889.98px;top:516.23px;font-size:20.2px;line-height:26px;letter-spacing:0.747px;color:#111;-webkit-text-stroke:0.55px #111;">Church Building</div>
<div class="tx" style="left:889.98px;top:560.23px;font-size:20.2px;line-height:26px;letter-spacing:0.590px;color:#111;-webkit-text-stroke:0.55px #111;">Furnishings</div>
<div class="tx" style="left:890.98px;top:604.23px;font-size:20.2px;line-height:26px;letter-spacing:0.537px;color:#111;-webkit-text-stroke:0.55px #111;">Accounts Receivable</div>
<div class="tx" style="left:889.98px;top:648.23px;font-size:20.2px;line-height:26px;letter-spacing:0.716px;color:#111;-webkit-text-stroke:0.55px #111;">Checking - School (DNU)</div>
<div class="tx" style="left:323.17px;top:1107.32px;font-size:22px;line-height:29px;letter-spacing:0.244px;color:#111;-webkit-text-stroke:0.55px #111;">All</div>
<div class="tx" style="left:396.27px;top:1107.32px;font-size:22px;line-height:29px;letter-spacing:0.531px;color:#111;-webkit-text-stroke:0.55px #111;">None</div>
<div class="tx" style="left:874.98px;top:1107.32px;font-size:22px;line-height:29px;letter-spacing:0.144px;color:#111;-webkit-text-stroke:0.55px #111;">All</div>
<div class="tx" style="left:948.07px;top:1107.32px;font-size:22px;line-height:29px;letter-spacing:0.697px;color:#111;-webkit-text-stroke:0.55px #111;">None</div>
</div>
</div>
</body>
</html>
